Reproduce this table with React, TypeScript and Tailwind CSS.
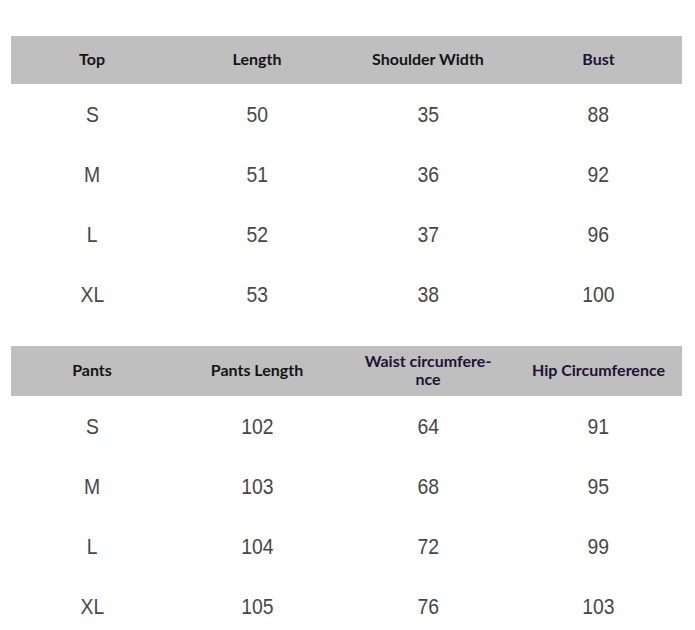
const colWidths = ["w-[162px]", "w-[168px]", "w-[174px]", "w-[167px]"];

type Head = { label: React.ReactNode; tint?: boolean };

const topHead: Head[] = [
  { label: "Top" },
  { label: "Length" },
  { label: "Shoulder Width" },
  { label: "Bust", tint: true },
];

const topRows = [
  ["S", "50", "35", "88"],
  ["M", "51", "36", "92"],
  ["L", "52", "37", "96"],
  ["XL", "53", "38", "100"],
];

const pantsHead: Head[] = [
  { label: "Pants" },
  { label: "Pants Length" },
  {
    label: (
      <>
        Waist circumfere-
        <br />
        nce
      </>
    ),
    tint: true,
  },
  { label: "Hip Circumference", tint: true },
];

const pantsRows = [
  ["S", "102", "64", "91"],
  ["M", "103", "68", "95"],
  ["L", "104", "72", "99"],
  ["XL", "105", "76", "103"],
];

function SizeTable({ head, rows, headH }: { head: Head[]; rows: string[][]; headH: string }) {
  return (
    <div className="w-[671px]">
      <div className={`flex bg-[#bfbfbf] ${headH}`}>
        {head.map((h, i) => (
          <div
            key={i}
            className={`${colWidths[i]} flex items-center justify-center pb-[3px] text-center text-[16px] leading-[18px] font-bold font-['Lato',sans-serif] ${
              h.tint ? "text-[#1e1236]" : "text-[#141414]"
            }`}
          >
            {h.label}
          </div>
        ))}
      </div>
      {rows.map((r, ri) => (
        <div key={ri} className="flex h-[60px]">
          {r.map((c, ci) => (
            <div key={ci} className={`${colWidths[ci]} flex items-center justify-center`}>
              {/* narrow digits, like the source's condensed face */}
              <span className="inline-block scale-x-[0.88] text-[22px] text-[#474747] font-['Liberation_Sans',sans-serif]">
                {c}
              </span>
            </div>
          ))}
        </div>
      ))}
    </div>
  );
}

export default function App() {
  return (
    <div className="w-[695px] h-[630px] overflow-hidden bg-white pl-[11px] pt-[36px]">
      <SizeTable head={topHead} rows={topRows} headH="h-[48px]" />
      <div className="h-[22px]" />
      <SizeTable head={pantsHead} rows={pantsRows} headH="h-[50px]" />
    </div>
  );
}
